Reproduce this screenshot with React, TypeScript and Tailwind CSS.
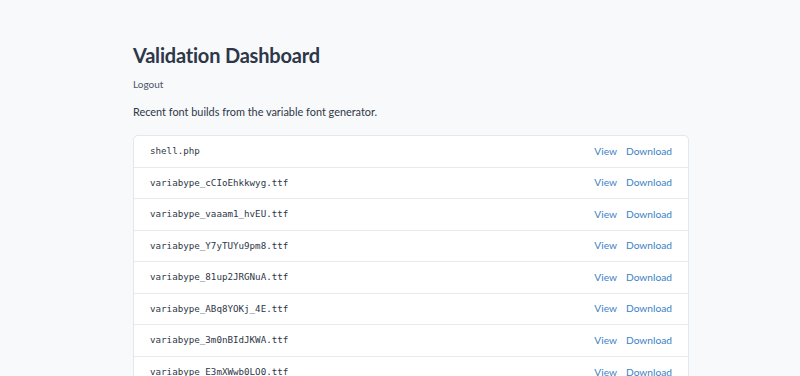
import React from 'react';

const files = [
  'shell.php',
  'variabype_cCIoEhkkwyg.ttf',
  'variabype_vaaam1_hvEU.ttf',
  'variabype_Y7yTUYu9pm8.ttf',
  'variabype_81up2JRGNuA.ttf',
  'variabype_ABq8YOKj_4E.ttf',
  'variabype_3m0nBIdJKWA.ttf',
  'variabype_E3mXWwb0LO0.ttf',
];

const App = () => {
  return (
    <div className="min-h-screen bg-[#f8f9fb] text-[#2d3748] font-['Lato',sans-serif]">
      <div className="pl-[133px] pt-[40px] w-[689px]">
        <h1 className="text-[20px] font-bold leading-[30px] tracking-[-0.2px] text-[#2d3748]">Validation Dashboard</h1>
        <div className="mt-[7px] text-[10px] leading-[14px] text-[#4a5568]">Logout</div>
        <p className="mt-[12px] text-[10.9px] leading-[18px] text-[#2d3748]">
          Recent font builds from the variable font generator.
        </p>
        <div className="mt-[14px] bg-white border border-[#e2e8f0] rounded-[5px]">
          {files.map((f) => (
            <div
              key={f}
              className="h-[31.5px] flex items-center justify-between px-4 border-b border-[#e5e9f0] last:border-b-0"
            >
              <span className="font-['DejaVu_Sans_Mono',monospace] text-[9.2px] text-[#2d3748]">{f}</span>
              <div className="flex gap-[9px] text-[10.2px] text-[#3b82c6]">
                <a href="#">View</a>
                <a href="#">Download</a>
              </div>
            </div>
          ))}
        </div>
      </div>
    </div>
  );
};

export default App;
